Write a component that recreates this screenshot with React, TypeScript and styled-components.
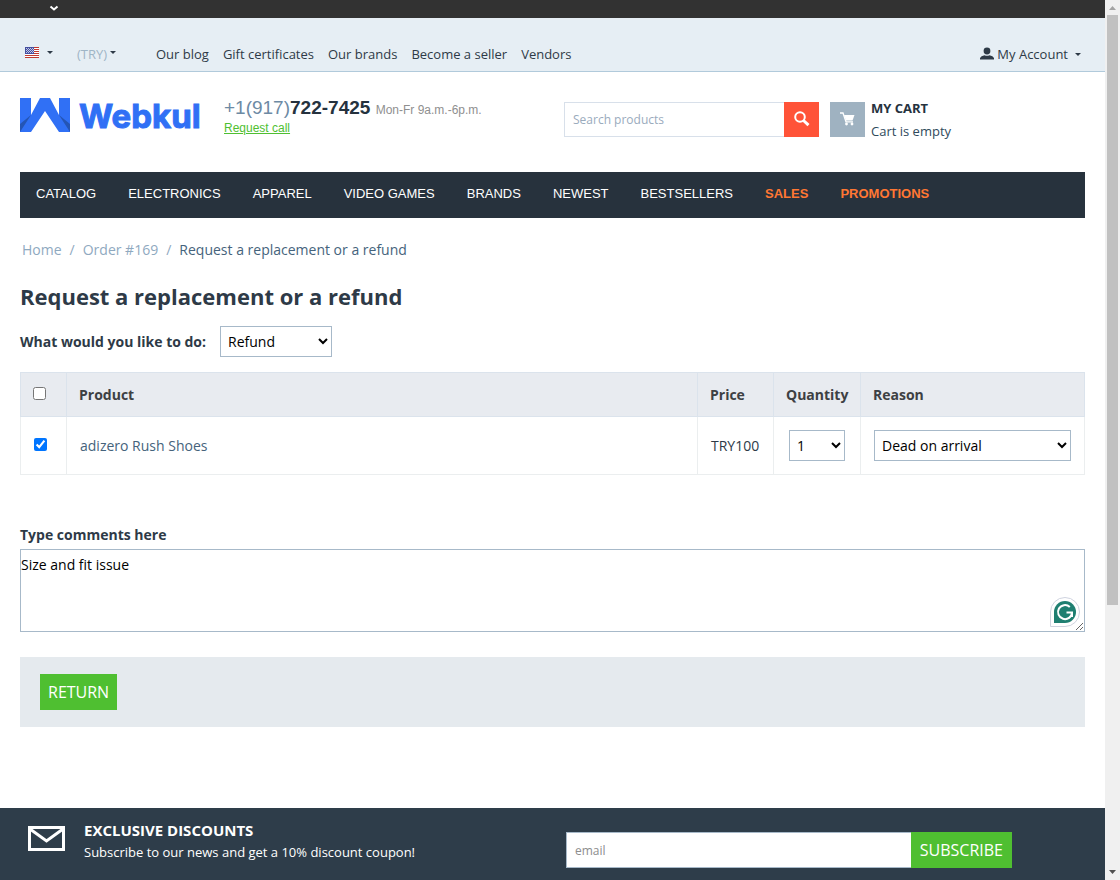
import React, { useState } from "react";
import styled, { createGlobalStyle } from "styled-components";

const GlobalStyle = createGlobalStyle`
  * { box-sizing: border-box; }
  body {
    margin: 0;
    background: #fff;
    color: #2e3a47;
    font: 14px/20px "Open Sans", sans-serif;
  }
  a { color: inherit; text-decoration: none; }
  button, input, select, textarea { font-family: inherit; border-radius: 0; }
`;

const Shell = styled.div`
  display: grid;
  grid-template-columns: minmax(0, 1fr) 15px;
`;

const Page = styled.div`
  display: flex;
  flex-direction: column;
  min-height: 100vh;
`;

const ScrollTrack = styled.div`
  position: sticky;
  top: 0;
  height: 100vh;
  display: flex;
  flex-direction: column;
  align-items: center;
  background: #f0f0f0;
`;

const ScrollThumb = styled.div`
  width: 11px;
  height: 67%;
  margin-bottom: auto;
  background: #c1c1c1;
`;

const DarkStrip = styled.div`
  height: 18px;
  padding-left: 49px;
  background: #323232;
  svg { display: block; }
`;

const TopBar = styled.div`
  height: 54px;
  display: flex;
  align-items: center;
  padding: 19px 24px 0 25px;
  background: #e6eef4;
  border-bottom: 1px solid #b1cadb;
  font-size: 13px;
  line-height: 18px;
`;

const PlainButton = styled.button<{ $muted?: boolean; $width?: number }>`
  display: flex;
  align-items: center;
  padding: 0;
  border: 0;
  background: none;
  font-size: 13px;
  line-height: 18px;
  color: ${(p) => (p.$muted ? "#9fb5c6" : "#2e3a47")};
  width: ${(p) => (p.$width ? `${p.$width}px` : "auto")};
`;

const Caret = styled.span<{ $gap: number; $raised?: boolean }>`
  margin-left: ${(p) => p.$gap}px;
  margin-bottom: ${(p) => (p.$raised ? 4 : 0)}px;
  border: 3px solid transparent;
  border-top-color: #2e3a47;
  border-bottom: 0;
`;

const QuickLinks = styled.nav`
  display: flex;
  flex: 1;
  gap: 14px;
`;

const Container = styled.div`
  padding: 0 20px;
`;

const Header = styled.header`
  display: grid;
  grid-template-columns: 204px 340fr 255fr 266fr;
  height: 100px;
`;

const LogoLink = styled.a`
  padding-top: 18px;
  svg { display: block; }
`;

const Phone = styled.div`
  padding-top: 26px;
  font: 12px/18px "Liberation Sans", Arial, sans-serif;
  color: #8f8f8f;
`;

const PhoneNumber = styled.span`
  margin-right: 2px;
  font-size: 19px;
  line-height: 20px;
  color: #6d8aa4;
  strong { color: #25323e; }
`;

const RequestLink = styled.a`
  display: block;
  color: #4fbf31;
  text-decoration: underline;
`;

const SearchForm = styled.form`
  display: flex;
  height: 35px;
  margin-top: 30px;
`;

const SearchInput = styled.input`
  flex: 1;
  min-width: 0;
  padding: 0 8px;
  border: 1px solid #d8e0ea;
  border-right: 0;
  font-size: 12px;
  &::placeholder { color: #9aabbd; }
`;

const IconTile = styled.button<{ $color: string }>`
  flex: none;
  display: flex;
  align-items: center;
  justify-content: center;
  width: 35px;
  height: 35px;
  padding: 0 0 2px;
  border: 0;
  background: ${(p) => p.$color};
`;

const Cart = styled.div`
  display: flex;
  gap: 6px;
  padding: 30px 0 0 11px;
  font-size: 13px;
`;

const CartText = styled.div`
  display: flex;
  flex-direction: column;
  gap: 3px;
  margin-top: -4px;
  color: #2f4a5c;
  strong { color: #25323e; }
`;

const MainNav = styled.nav`
  display: flex;
  height: 46px;
  gap: 32px;
  padding: 12px 16px;
  background: #27323d;
  font: 13px/20px "Liberation Sans", Arial, sans-serif;
`;

const NavLink = styled.a<{ $hot?: boolean }>`
  color: ${(p) => (p.$hot ? "#ff7733" : "#fff")};
  font-weight: ${(p) => (p.$hot ? 700 : 400)};
`;

const Breadcrumbs = styled.nav`
  display: flex;
  gap: 8px;
  padding: 22px 2px 0;
  color: #8fa9bf;
  span:last-child { color: #45637c; }
`;

const Title = styled.h1`
  margin: 21px 0 15px;
  font-size: 22px;
  line-height: 30px;
  font-weight: 700;
`;

const ActionRow = styled.div`
  display: flex;
  align-items: center;
  gap: 14px;
  label { font-weight: 700; }
`;

const Select = styled.select<{ $width: string }>`
  display: block;
  width: ${(p) => p.$width};
  height: 31px;
  padding: 0 3px;
  border: 1px solid #a7b9c9;
  background-color: #fff;
  color: #000;
  font-size: 14px;
`;

const Table = styled.table`
  width: 100%;
  margin-top: 15px;
  border-collapse: collapse;
  table-layout: fixed;
  border: 1px solid #dbe3ec;
  border-bottom-color: #ebeeef;
  border-right-color: #ebeeef;
`;

const HeadCell = styled.th<{ $width?: number }>`
  width: ${(p) => (p.$width ? `${p.$width}px` : "auto")};
  height: 44px;
  padding: 0 12px;
  border: 1px solid #dbe3ec;
  background: #e8ebf0;
  color: #3d4043;
  text-align: left;
`;

const Cell = styled.td<{ $indent?: number }>`
  height: 58px;
  padding: 0 13px 0 ${(p) => p.$indent ?? 13}px;
  border: 1px solid #ebeeef;
  a { color: #45637c; }
`;

const Check = styled.input`
  display: block;
  width: 13px;
  height: 13px;
  margin: 0 0 2px;
`;

const CommentLabel = styled.label`
  display: block;
  margin: 50px 0 4px;
  font-weight: 700;
`;

const CommentBox = styled.div`
  position: relative;
`;

const Comment = styled.textarea`
  display: block;
  width: 100%;
  height: 83px;
  padding: 5px 0;
  border: 1px solid #a7b9c9;
  color: #000;
  font-size: 14px;
  line-height: 20px;
  resize: vertical;
`;

const WritingBadge = styled.svg`
  position: absolute;
  right: 5px;
  bottom: 5px;
`;

const Actions = styled.div`
  margin: 25px 0 81px;
  padding: 17px 20px;
  background: #e5eaee;
`;

const GreenButton = styled.button<{ $wide?: boolean }>`
  display: block;
  height: 36px;
  padding: 0 ${(p) => (p.$wide ? 9 : 8)}px;
  border: 0;
  background: #4fbf31;
  color: #fff;
  font-size: 16px;
  line-height: 20px;
`;

const Footer = styled.footer`
  flex: 1;
  display: grid;
  grid-template-columns: 538fr 446fr 93fr;
  align-items: start;
  padding: 0 0 12px 28px;
  background: #2e3d4a;
  color: #fff;
`;

const Discount = styled.div`
  display: flex;
  gap: 19px;
  padding-top: 11px;
  font-size: 13px;
  line-height: 22px;
  svg { flex: none; margin-top: 7px; }
`;

const DiscountTitle = styled.strong`
  display: block;
  font-size: 15px;
`;

const SubscribeForm = styled.form`
  display: flex;
  padding-top: 24px;
`;

const EmailInput = styled.input`
  flex: 1;
  min-width: 0;
  height: 36px;
  padding: 0 8px;
  border: 1px solid #a7b9c9;
  border-right: 0;
  font-size: 12px;
  &::placeholder { color: #8d8d8d; }
`;

const FlagIcon = styled.svg`
  margin-bottom: 4px;
`;

const Flag = () => (
  <FlagIcon width="14" height="11" viewBox="0 0 14 11" shapeRendering="crispEdges" aria-hidden="true">
    <path fill="#fff" d="M0 0h14v11H0z" />
    <path fill="#c0392f" d="M0 0h14v1H0zM0 2h14v1H0zM0 4h14v1H0zM0 6h14v1H0zM0 8h14v1H0zM0 10h14v1H0z" />
    <path fill="#4650a0" d="M0 0h9v7H0z" />
    <path stroke="#c3c8e6" strokeDasharray="1 1" d="M1 1.5h8M2 2.5h7M1 3.5h8M2 4.5h7M1 5.5h8" />
  </FlagIcon>
);

const Logo = () => (
  <svg width="190" height="50" viewBox="0 -8 190 50" role="img" aria-label="Webkul">
    <path fill="#3070f5" d="M0 0H11V17L20 0H30L39 17V0H50V34H39L25 13L11 34H0Z" />
    <path fill="#2455b5" d="M11 17L0 26V34ZM39 17L50 26V34Z" />
    <text x="59" y="30" fill="#3070f5" stroke="#3070f5" strokeWidth="1" fontFamily="Inter, sans-serif" fontWeight="700" fontSize="33">Webkul</text>
  </svg>
);

const quickLinks = ["Our blog", "Gift certificates", "Our brands", "Become a seller", "Vendors"];
const navLinks = ["Catalog", "Electronics", "Apparel", "Video games", "Brands", "Newest", "Bestsellers"];

export default function App() {
  const [picked, setPicked] = useState(true);
  const stop = (e: React.FormEvent) => e.preventDefault();

  return (
    <Shell>
      <GlobalStyle />
      <Page>
        <DarkStrip>
          <svg width="10" height="12" viewBox="0 0 10 12" aria-hidden="true">
            <path d="M1.5 6.5L5 9.5L8.5 6.5" fill="none" stroke="#fff" strokeWidth="2" />
          </svg>
        </DarkStrip>
        <TopBar>
          <PlainButton $width={52} aria-label="Language">
            <Flag />
            <Caret $gap={8} $raised />
          </PlainButton>
          <PlainButton $muted $width={79} aria-label="Currency">
            (TRY)<Caret $gap={3} $raised />
          </PlainButton>
          <QuickLinks>
            {quickLinks.map((text) => (
              <a href="#" key={text}>{text}</a>
            ))}
          </QuickLinks>
          <PlainButton>
            <svg width="14" height="14" viewBox="0 0 14 14" aria-hidden="true">
              <circle cx="7" cy="4" r="3.4" fill="#2e3a47" />
              <path d="M0 12.5V11Q1 8.8 4.5 8.2Q7 9.4 9.5 8.2Q13 8.8 14 11V12.5Z" fill="#2e3a47" />
            </svg>
            <span>&nbsp;My Account</span>
            <Caret $gap={7} />
          </PlainButton>
        </TopBar>

        <Container>
          <Header>
            <LogoLink href="#"><Logo /></LogoLink>
            <Phone>
              <PhoneNumber>+1(917)<strong>722-7425</strong></PhoneNumber>{" "}
              <span>Mon-Fr 9a.m.-6p.m.</span>
              <RequestLink href="#">Request call</RequestLink>
            </Phone>
            <SearchForm onSubmit={stop}>
              <SearchInput type="text" placeholder="Search products" aria-label="Search products" />
              <IconTile $color="#ff5338" type="submit" aria-label="Search">
                <svg width="16" height="16" viewBox="0 0 16 16" fill="none" stroke="#fff">
                  <circle cx="6" cy="6" r="4.8" strokeWidth="2" />
                  <path d="M9.5 9.5L14.5 14.2" strokeWidth="3" />
                </svg>
              </IconTile>
            </SearchForm>
            <Cart>
              <IconTile $color="#9fb2c1" type="button" aria-label="Open cart">
                <svg width="15" height="14" viewBox="0 0 15 14">
                  <path d="M0 1H3L6 9.8H13" fill="none" stroke="#fff" strokeWidth="1.3" />
                  <path d="M4 3H14.5L12.5 8.4H6Z" fill="#fff" />
                  <circle cx="6.5" cy="12" r="1.4" fill="#fff" />
                  <circle cx="12" cy="12" r="1.4" fill="#fff" />
                </svg>
              </IconTile>
              <CartText>
                <strong>MY CART</strong>
                <span>Cart is empty</span>
              </CartText>
            </Cart>
          </Header>

          <MainNav>
            {navLinks.map((text) => (
              <NavLink href="#" key={text}>{text.toUpperCase()}</NavLink>
            ))}
            <NavLink $hot href="#">SALES</NavLink>
            <NavLink $hot href="#">PROMOTIONS</NavLink>
          </MainNav>

          <main>
            <Breadcrumbs aria-label="Breadcrumbs">
              <a href="#">Home</a>
              <span>/</span>
              <a href="#">Order #169</a>
              <span>/</span>
              <span>Request a replacement or a refund</span>
            </Breadcrumbs>
            <Title>Request a replacement or a refund</Title>
            <ActionRow>
              <label htmlFor="action">What would you like to do:</label>
              <Select id="action" $width="112px" defaultValue="Refund">
                <option>Refund</option>
                <option>Replace</option>
              </Select>
            </ActionRow>

            <Table>
              <thead>
                <tr>
                  <HeadCell $width={46}><Check type="checkbox" aria-label="Select all" /></HeadCell>
                  <HeadCell>Product</HeadCell>
                  <HeadCell $width={76}>Price</HeadCell>
                  <HeadCell $width={87}>Quantity</HeadCell>
                  <HeadCell $width={224}>Reason</HeadCell>
                </tr>
              </thead>
              <tbody>
                <tr>
                  <Cell>
                    <Check
                      type="checkbox"
                      aria-label="adizero Rush Shoes"
                      checked={picked}
                      onChange={(e) => setPicked(e.target.checked)}
                    />
                  </Cell>
                  <Cell><a href="#">adizero Rush Shoes</a></Cell>
                  <Cell>TRY100</Cell>
                  <Cell $indent={15}>
                    <Select $width="56px" aria-label="Quantity"><option>1</option></Select>
                  </Cell>
                  <Cell>
                    <Select $width="100%" aria-label="Reason"><option>Dead on arrival</option></Select>
                  </Cell>
                </tr>
              </tbody>
            </Table>

            <CommentLabel htmlFor="comment">Type comments here</CommentLabel>
            <CommentBox>
              <Comment id="comment" defaultValue="Size and fit issue" spellCheck={false} />
              <WritingBadge width="30" height="30" viewBox="0 0 30 30" aria-hidden="true">
                <path d="M.5 29.5V15A14.5 14.5 0 1 1 15 29.5Z" fill="#fff" stroke="#cfd3df" />
                <path d="M4 26V15A11 11 0 1 1 15 26Z" fill="#1f7f71" />
                <path d="M19.8 10A7 7 0 1 0 22 15.5H16.5M22 15.5V20" fill="none" stroke="#fff" strokeWidth="2" />
              </WritingBadge>
            </CommentBox>
            <Actions>
              <GreenButton type="button">RETURN</GreenButton>
            </Actions>
          </main>
        </Container>

        <Footer>
          <Discount>
            <svg width="37" height="25" viewBox="0 0 37 25" fill="none" stroke="#fff" aria-hidden="true">
              <path d="M1.5 1.5H35.5V23.5H1.5Z" strokeWidth="3" />
              <path d="M2 3L18.5 15L35 3" strokeWidth="3" />
            </svg>
            <div>
              <DiscountTitle>EXCLUSIVE DISCOUNTS</DiscountTitle>
              Subscribe to our news and get a 10% discount coupon!
            </div>
          </Discount>
          <SubscribeForm onSubmit={stop}>
            <EmailInput type="email" placeholder="email" aria-label="email" />
            <GreenButton $wide type="submit">SUBSCRIBE</GreenButton>
          </SubscribeForm>
        </Footer>
      </Page>
      <ScrollTrack aria-hidden="true">
        <svg width="15" height="15" viewBox="0 0 15 15"><path d="M4 10L7.5 6L11 10Z" fill="#a3a3a3" /></svg>
        <ScrollThumb />
        <svg width="15" height="15" viewBox="0 0 15 15"><path d="M4 5L7.5 9L11 5Z" fill="#505050" /></svg>
      </ScrollTrack>
    </Shell>
  );
}
